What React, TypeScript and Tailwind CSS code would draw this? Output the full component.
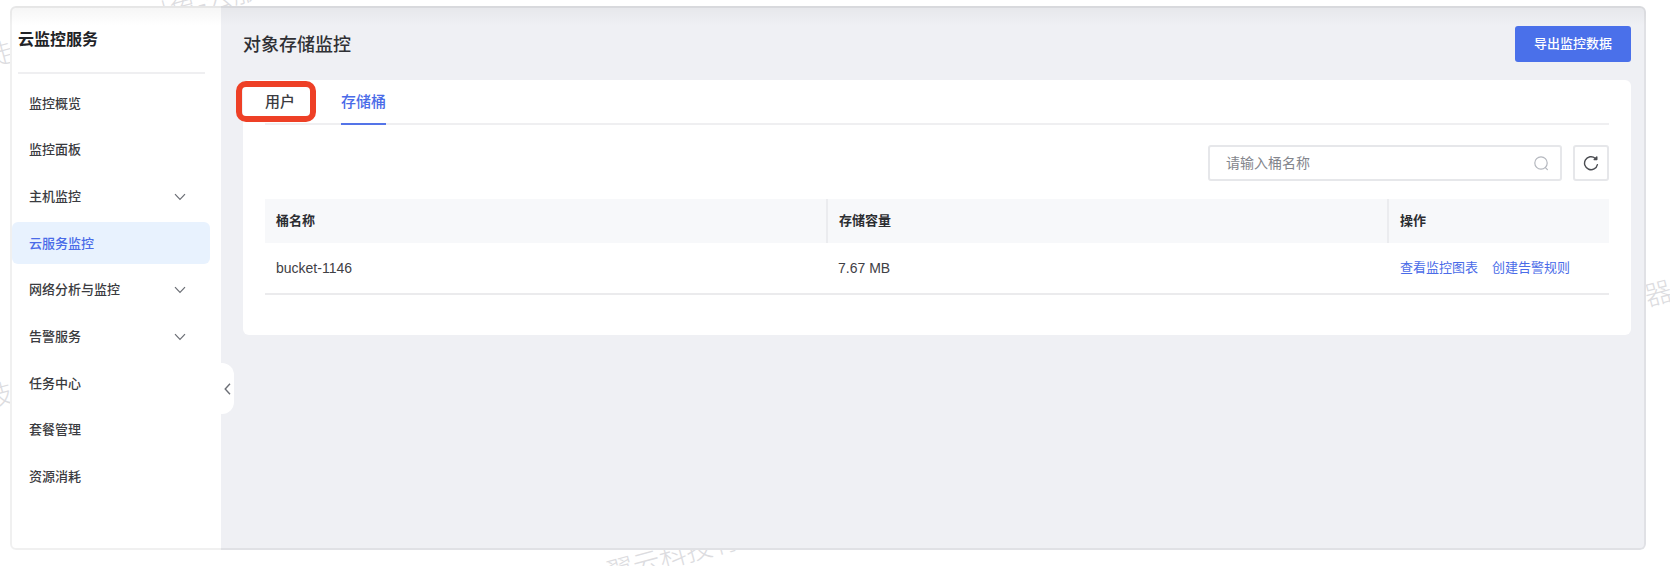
import { useState } from "react";

type NavItem = { label: string; expandable?: boolean };

const NAV_ITEMS: NavItem[] = [
  { label: "监控概览" },
  { label: "监控面板" },
  { label: "主机监控", expandable: true },
  { label: "云服务监控" },
  { label: "网络分析与监控", expandable: true },
  { label: "告警服务", expandable: true },
  { label: "任务中心" },
  { label: "套餐管理" },
  { label: "资源消耗" },
];

const TABS = ["用户", "存储桶"];

const BUCKETS = [{ name: "bucket-1146", size: "7.67 MB" }];

function ChevronDown() {
  return (
    <svg width="12" height="8" viewBox="0 0 12 8" fill="none" stroke="#6b6e75" strokeWidth="1.2" aria-hidden="true">
      <path d="M1 1.2 6 6.4l5-5.2" />
    </svg>
  );
}

function ChevronLeft() {
  return (
    <svg width="7" height="12" viewBox="0 0 7 12" fill="none" stroke="#6b6e75" strokeWidth="1.4" aria-hidden="true">
      <path d="M6 .8 1.2 6 6 11.2" />
    </svg>
  );
}

function SearchIcon() {
  return (
    <svg width="16" height="16" viewBox="0 0 16 16" fill="none" stroke="#b4b7be" strokeWidth="1.2" aria-hidden="true">
      <circle cx="8" cy="8" r="6.2" />
      <path d="m12.4 12.6 2 2" strokeLinecap="round" />
    </svg>
  );
}

function RefreshIcon() {
  return (
    <svg width="16" height="16" viewBox="0 0 16 16" fill="none" stroke="#4b4d52" strokeWidth="1.4" aria-hidden="true">
      <path d="M14.4 9.6A6.5 6.5 0 1 1 12.2 3.2" strokeLinecap="round" />
      <path d="M11.2 4.6h2.6V2z" fill="#4b4d52" strokeLinejoin="round" />
    </svg>
  );
}

function Watermark({ text, className }: { text: string; className: string }) {
  return (
    <span
      aria-hidden="true"
      className={`pointer-events-none absolute -rotate-15 text-[27px] font-light whitespace-nowrap text-[#dcdce0] select-none ${className}`}
    >
      {text}
    </span>
  );
}

function Sidebar() {
  const [active, setActive] = useState("云服务监控");

  return (
    <aside className="relative flex w-[211px] shrink-0 flex-col bg-white pt-0.5 pl-0.5">
      <h2 className="mr-4 ml-1.5 border-b-2 border-[#efeff1] pt-5 pb-5 text-base leading-6 font-bold text-[#222327]">
        云监控服务
      </h2>
      <nav className="mt-2 mb-[53px] flex flex-1 flex-col justify-between pr-[11px]">
        {NAV_ITEMS.map((item) => (
          <button
            key={item.label}
            type="button"
            onClick={() => setActive(item.label)}
            className={`flex h-[42px] items-center justify-between rounded-md pt-px pr-6 pl-[17px] text-[13px] font-medium ${
              item.label === active ? "bg-[#e8f2fe] text-[#4a6be8]" : "text-[#3a3b40]"
            }`}
          >
            {item.label}
            {item.expandable && <ChevronDown />}
          </button>
        ))}
      </nav>
      <button
        type="button"
        aria-label="收起菜单"
        className="absolute top-[357px] -right-[13px] flex h-[51px] w-[13px] items-center justify-center rounded-r-xl bg-white"
      >
        <ChevronLeft />
      </button>
    </aside>
  );
}

function BucketTable() {
  return (
    <table className="mt-[18px] w-full table-fixed border-collapse text-left text-[#3f4045]">
      <thead className="bg-[#f7f8fa] text-[13px] text-[#2c2d31]">
        <tr className="h-11">
          <th className="w-[562px] px-[11px] font-bold">桶名称</th>
          <th className="w-[561px] border-l-2 border-[#ebecef] px-[11px] font-bold">存储容量</th>
          <th className="border-l-2 border-[#ebecef] px-[11px] font-bold">操作</th>
        </tr>
      </thead>
      <tbody>
        {BUCKETS.map((bucket) => (
          <tr key={bucket.name} className="h-[51px] border-b-2 border-[#ebebed] text-sm">
            <td className="px-[11px]">{bucket.name}</td>
            <td className="px-[11px]">{bucket.size}</td>
            <td className="px-3 text-[13px] text-[#4a6be8]">
              <a href="#chart">查看监控图表</a>
              <a href="#rule" className="ml-3.5">
                创建告警规则
              </a>
            </td>
          </tr>
        ))}
      </tbody>
    </table>
  );
}

export default function App() {
  const [tab, setTab] = useState("存储桶");
  const [keyword, setKeyword] = useState("");

  return (
    <div className="relative flex min-h-screen overflow-hidden bg-white pt-1.5 pr-6 pb-4 pl-2.5 font-['Liberation_Sans','Noto_Sans_CJK_SC',sans-serif]">
      <Watermark text="对象-云服" className="-top-4 left-[143px]" />
      <Watermark text="徒" className="top-[35px] -left-3.5" />
      <Watermark text="技" className="top-[376px] -left-3.5" />
      <Watermark text="器" className="top-[274px] -right-0.5" />
      <Watermark text="翼云科技有限" className="top-[533px] left-[605px]" />

      <div className="relative flex flex-1 overflow-hidden rounded-md bg-[#eff0f4]">
        <Sidebar />
        <main className="min-w-0 flex-1 pt-0.5 pr-[15px] pl-[22px]">
          <header className="flex items-center justify-between pt-[18px] pb-[18px]">
            <h1 className="pt-0.5 text-lg leading-6 font-medium text-[#2f3035]">对象存储监控</h1>
            <button
              type="button"
              className="h-9 rounded-[3px] bg-[#4a70ea] px-[19px] text-[13px] font-medium text-white"
            >
              导出监控数据
            </button>
          </header>

          <section className="rounded-md bg-white px-[22px] pb-10">
            <div role="tablist" className="flex gap-[46px] border-b-2 border-[#efeff1]">
              {TABS.map((name) => (
                <button
                  key={name}
                  type="button"
                  role="tab"
                  aria-selected={name === tab}
                  onClick={() => setTab(name)}
                  className={`relative -mb-0.5 h-[45px] border-b-2 pt-0.5 text-[15px] font-medium ${
                    name === tab ? "border-[#5474e8] text-[#4a6be8]" : "border-transparent text-[#3a3b40]"
                  }`}
                >
                  {name}
                  {name === "用户" && (
                    <span className="pointer-events-none absolute top-px -right-[21px] bottom-px -left-[29px] rounded-[10px] border-[6px] border-[#ee4026]" />
                  )}
                </button>
              ))}
            </div>

            <div className="mt-5 flex justify-end gap-[11px]">
              <label className="flex h-9 w-[354px] items-center rounded-[3px] border-2 border-[#e6e7ea] pr-[11px] pl-4">
                <input
                  type="text"
                  aria-label="桶名称"
                  value={keyword}
                  onChange={(e) => setKeyword(e.target.value)}
                  placeholder="请输入桶名称"
                  className="min-w-0 flex-1 text-sm text-[#3a3b40] placeholder:text-[#83858c] focus:outline-none"
                />
                <SearchIcon />
              </label>
              <button
                type="button"
                aria-label="刷新"
                className="flex size-9 items-center justify-center rounded-[3px] border-2 border-[#e6e7ea]"
              >
                <RefreshIcon />
              </button>
            </div>

            <BucketTable />
          </section>
        </main>
        <div className="pointer-events-none absolute inset-x-0 top-0 h-5 bg-linear-to-b from-black/4 to-transparent" />
        <div className="pointer-events-none absolute inset-0 rounded-md border-2 border-black/6" />
      </div>
    </div>
  );
}
